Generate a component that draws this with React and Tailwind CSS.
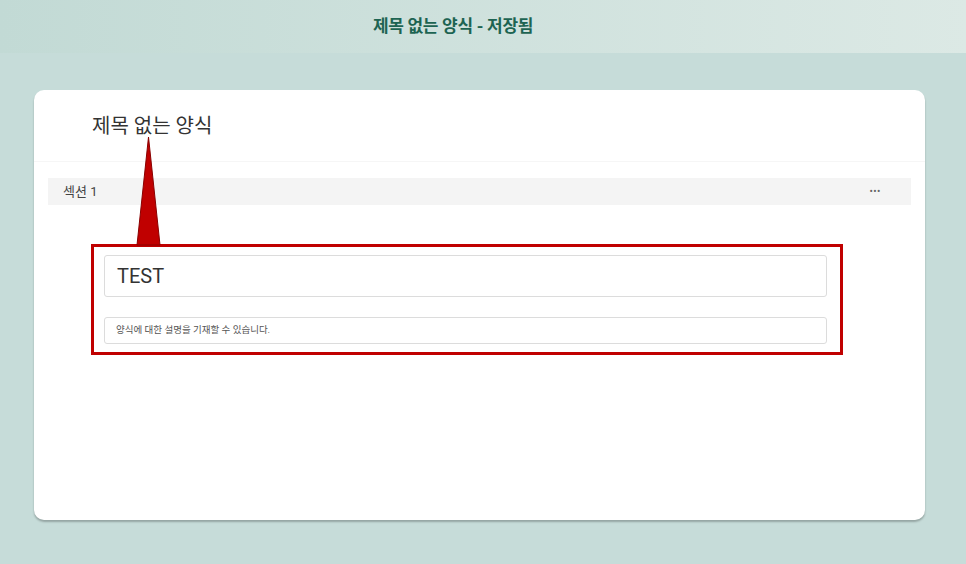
export default function App() {
  const kr = { fontFamily: 'Roboto, "Noto Sans CJK KR", sans-serif' };
  return (
    <div className="w-[966px] h-[564px] bg-[#c6dcd9] overflow-hidden relative" style={kr}>
      <div className="h-[53px] bg-gradient-to-r from-[#c2dad5] to-[#dce9e5] flex items-center justify-center pr-[60px]">
        <span className="text-[17px] font-bold text-[#1d6452] tracking-[-0.3px]">제목 없는 양식 - 저장됨</span>
      </div>
      <div className="ml-[34px] mt-[37px] w-[891px] h-[430px] bg-white rounded-[10px] shadow-[0_2px_2px_rgba(0,0,0,0.25)]">
        <div className="h-[72px] border-b border-[#f6f6f6] pl-[58px] pt-[22px]">
          <span className="text-[20px] text-[#333] leading-[28px]">제목 없는 양식</span>
        </div>
        <div className="mx-[14px] mt-[16px] h-[27px] bg-[#f4f4f4] flex items-center justify-between pl-[15px] pr-[30px]">
          <span className="text-[13px] text-[#444]">섹션 1</span>
          <span className="text-[10px] text-[#666] tracking-[0.5px]">•••</span>
        </div>
        <div className="ml-[57px] mt-[39px] w-[752px] h-[111px] border-[3px] border-[#c00000] pl-[10px] pr-[13px] pt-[8px] flex flex-col gap-[20px]">
          <div className="h-[42px] border border-[#dcdcdc] rounded-[3px] flex items-center pl-[12px]">
            <span className="text-[20px] text-[#333]">TEST</span>
          </div>
          <div className="h-[27px] border border-[#dcdcdc] rounded-[3px] flex items-center pl-[11px]">
            <span className="text-[9.5px] text-[#555]">양식에 대한 설명을 기재할 수 있습니다.</span>
          </div>
        </div>
      </div>
      <svg className="absolute left-0 top-0 pointer-events-none" width="966" height="564">
        <polygon points="148.5,137 137,245 160,245" fill="#c00000" stroke="#8a0000" strokeWidth="1" />
      </svg>
    </div>
  );
}
